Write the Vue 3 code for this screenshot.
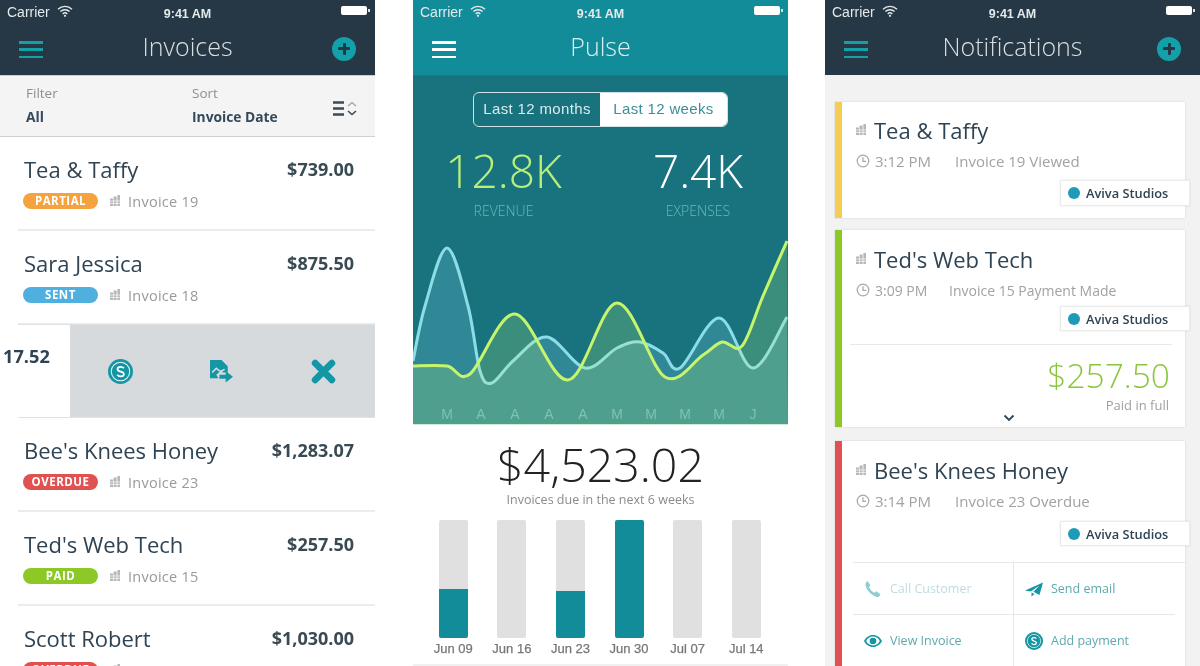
<script setup>
const rows = [
  { name: 'Tea & Taffy', amount: '$739.00', status: 'PARTIAL', cls: 'partial', invoice: 'Invoice 19' },
  { name: 'Sara Jessica', amount: '$875.50', status: 'SENT', cls: 'sent', invoice: 'Invoice 18' },
]
const rowsAfter = [
  { name: "Bee's Knees Honey", amount: '$1,283.07', status: 'OVERDUE', cls: 'overdue', invoice: 'Invoice 23' },
  { name: "Ted's Web Tech", amount: '$257.50', status: 'PAID', cls: 'paidpill', invoice: 'Invoice 15' },
  { name: 'Scott Robert', amount: '$1,030.00', status: 'OVERDUE', cls: 'overdue', invoice: 'Invoice 11' },
]
const months = ['M', 'A', 'A', 'A', 'A', 'M', 'M', 'M', 'M', 'J']
const bars = [
  { label: 'Jun 09', fill: 49 },
  { label: 'Jun 16', fill: 0 },
  { label: 'Jun 23', fill: 47 },
  { label: 'Jun 30', fill: 118 },
  { label: 'Jul 07', fill: 0 },
  { label: 'Jul 14', fill: 0 },
]
const blue = [[0,130],[12,75],[34,17],[55,75],[67,140],[79,152],[100,130],[134,106],[172,137],[204,117],[227,111],[250,122],[267,137],[306,87],[340,137],[374,86]]
const yellow = [[0,135],[34,135],[57,143],[102,83],[155,149],[204,72],[252,146],[290,124],[309,111],[329,115],[350,65],[374,10]]
function curve(p) {
  let d = `M${p[0][0]},${p[0][1]}`
  for (let i = 0; i < p.length - 1; i++) {
    const a = p[Math.max(i - 1, 0)], b = p[i], c = p[i + 1], e = p[Math.min(i + 2, p.length - 1)]
    const k = 6
    d += ` C${b[0] + (c[0] - a[0]) / k},${b[1] + (c[1] - a[1]) / k} ${c[0] - (e[0] - b[0]) / k},${c[1] - (e[1] - b[1]) / k} ${c[0]},${c[1]}`
  }
  return d
}
const blueLine = curve(blue)
const yellowLine = curve(yellow)
const blueArea = `${blueLine} L375,194 L0,194 Z`
const yellowArea = `${yellowLine} L375,194 L0,194 Z`
</script>

<template>
  <div class="page">
    <svg class="defs" width="0" height="0" aria-hidden="true">
      <symbol id="i-wifi" viewBox="0 0 16 12">
        <path d="M1 4.2a10 10 0 0 1 14 0M3.4 6.6a6.6 6.6 0 0 1 9.2 0M5.7 8.9a3.3 3.3 0 0 1 4.6 0" fill="none" stroke="currentColor" stroke-width="1.4" />
        <circle cx="8" cy="10.8" r="1.1" fill="currentColor" />
      </symbol>
      <symbol id="i-building" viewBox="0 0 10 11">
        <path d="M0 3.5h3v7.5H0zM3.6 1.5h3V11h-3zM7.4 0H10v11H7.4z" fill="currentColor" />
        <path d="M0 6h10M0 8.4h10" stroke="#fff" stroke-width=".7" />
      </symbol>
      <symbol id="i-clock" viewBox="0 0 16 16">
        <circle cx="8" cy="8" r="6.6" fill="none" stroke="currentColor" stroke-width="1.4" />
        <path d="M8 3.8V8.4H11.6" fill="none" stroke="currentColor" stroke-width="1.4" />
      </symbol>
      <symbol id="i-coin" viewBox="0 0 26 26">
        <circle cx="13" cy="13" r="13" fill="currentColor" />
        <circle cx="13" cy="13" r="9.6" fill="none" stroke="#fff" stroke-width="1.1" opacity=".9" />
        <path d="M16.5 9.6c-.8-1-2-1.5-3.4-1.5-1.9 0-3.2 1-3.2 2.5 0 3.3 6.6 1.7 6.6 5 0 1.500-1.400 2.500-3.400 2.500-1.500 0-2.800-.6-3.600-1.700" fill="none" stroke="#fff" stroke-width="1.800" />
      </symbol>
    </svg>

    <!-- Invoices -->
    <section class="phone">
      <header class="top dark">
        <div class="status">
          <span class="carrier">Carrier</span>
          <svg class="wifi"><use href="#i-wifi" /></svg>
          <span class="clock-time">9:41 AM</span>
          <span class="battery"></span>
        </div>
        <div class="nav">
          <span class="burger teal"><i></i><i></i><i></i></span>
          <h1>Invoices</h1>
          <span class="plus"></span>
        </div>
      </header>
      <div class="filters">
        <div class="filter-col">
          <span class="f-label">Filter</span>
          <b>All</b>
        </div>
        <div class="filter-col sort-col">
          <span class="f-label">Sort</span>
          <b>Invoice Date</b>
        </div>
        <svg class="sort-icon" viewBox="0 0 25 15">
          <path d="M0 1.500h11M0 7.500h11M0 13.500h11" stroke="#3b4a55" stroke-width="2.400" />
          <path d="M15 5l4-3.500 4 3.500" fill="none" stroke="#9aa3a8" stroke-width="1.300" />
          <path d="M15 10l4 3.500 4-3.500" fill="none" stroke="#3b4a55" stroke-width="1.600" />
        </svg>
      </div>
      <div v-for="r in rows" :key="r.name" class="row">
        <div class="row-top">
          <span class="name">{{ r.name }}</span>
          <span class="amount">{{ r.amount }}</span>
        </div>
        <div class="row-sub">
          <span class="pill" :class="r.cls">{{ r.status }}</span>
          <svg class="building"><use href="#i-building" /></svg>
          <span class="inv">{{ r.invoice }}</span>
        </div>
      </div>
      <div class="swipe">
        <div class="swipe-left"><span>17.52</span></div>
        <div class="swipe-actions">
          <svg class="act coin"><use href="#i-coin" /></svg>
          <svg class="act file" viewBox="0 0 24 24">
            <path d="M1 1h11l6 6v6h-5v-3l-6 5 2 3.500H1z" fill="currentColor" />
            <path d="M3 13l4-4 4 3 4-2" fill="none" stroke="#d6dadd" stroke-width="1.500" />
            <path d="M10 15h6v-3.500l7 5.500-7 5.500V19h-6z" fill="currentColor" />
          </svg>
          <svg class="act cross" viewBox="0 0 24 24">
            <path d="M4 4l16 16M20 4L4 20" stroke="currentColor" stroke-width="6.500" stroke-linecap="round" />
          </svg>
        </div>
      </div>
      <div v-for="r in rowsAfter" :key="r.name + r.invoice" class="row">
        <div class="row-top">
          <span class="name">{{ r.name }}</span>
          <span class="amount">{{ r.amount }}</span>
        </div>
        <div class="row-sub">
          <span class="pill" :class="r.cls">{{ r.status }}</span>
          <svg class="building"><use href="#i-building" /></svg>
          <span class="inv">{{ r.invoice }}</span>
        </div>
      </div>
    </section>

    <!-- Pulse -->
    <section class="phone mid">
      <header class="top tealbg">
        <div class="status">
          <span class="carrier">Carrier</span>
          <svg class="wifi"><use href="#i-wifi" /></svg>
          <span class="clock-time">9:41 AM</span>
          <span class="battery"></span>
        </div>
        <div class="nav">
          <span class="burger white"><i></i><i></i><i></i></span>
          <h1 class="pulse-title">Pulse</h1>
          <span class="plus-spacer"></span>
        </div>
      </header>
      <div class="pulse">
        <div class="segment">
          <span class="seg-off">Last 12 months</span>
          <span class="seg-on">Last 12 weeks</span>
        </div>
        <div class="stats">
          <div class="stat">
            <span class="stat-num green">12.8K</span>
            <span class="stat-label">REVENUE</span>
          </div>
          <div class="stat">
            <span class="stat-num">7.4K</span>
            <span class="stat-label">EXPENSES</span>
          </div>
        </div>
        <div class="chart">
          <svg class="chart-svg" viewBox="0 0 375 194">
            <path :d="blueArea" fill="#6bbad0" fill-opacity=".3" />
            <path :d="blueLine" fill="none" stroke="#8cdde8" stroke-width="3" />
            <path :d="yellowArea" fill="#c0f070" fill-opacity=".22" />
            <path :d="yellowLine" fill="none" stroke="#c6f56c" stroke-width="3" />
          </svg>
          <div class="months">
            <span v-for="(m, i) in months" :key="i">{{ m }}</span>
          </div>
        </div>
      </div>
      <div class="due">
        <div class="due-amount">$4,523.02</div>
        <div class="due-sub">Invoices due in the next 6 weeks</div>
      </div>
      <div class="bars">
        <div v-for="b in bars" :key="b.label" class="bar-col">
          <div class="bar-track">
            <div class="bar-fill" :style="{ height: b.fill + 'px' }"></div>
          </div>
          <span class="bar-label">{{ b.label }}</span>
        </div>
      </div>
      <div class="bottom-line"></div>
    </section>

    <!-- Notifications -->
    <section class="phone right">
      <header class="top dark">
        <div class="status">
          <span class="carrier">Carrier</span>
          <svg class="wifi"><use href="#i-wifi" /></svg>
          <span class="clock-time">9:41 AM</span>
          <span class="battery"></span>
        </div>
        <div class="nav">
          <span class="burger teal"><i></i><i></i><i></i></span>
          <h1>Notifications</h1>
          <span class="plus"></span>
        </div>
      </header>
      <div class="feed">
        <article class="card c-yellow">
          <div class="card-title"><svg class="building"><use href="#i-building" /></svg>Tea &amp; Taffy</div>
          <div class="card-meta">
            <svg class="clock"><use href="#i-clock" /></svg>
            <span class="meta-time">3:12 PM</span>
            <span class="meta-text t1">Invoice 19 Viewed</span>
          </div>
          <div class="tag"><i></i>Aviva Studios</div>
        </article>

        <article class="card c-green">
          <div class="card-title"><svg class="building"><use href="#i-building" /></svg>Ted's Web Tech</div>
          <div class="card-meta">
            <svg class="clock"><use href="#i-clock" /></svg>
            <span class="meta-time small">3:09 PM</span>
            <span class="meta-text small t2">Invoice 15 Payment Made</span>
          </div>
          <div class="tag"><i></i>Aviva Studios</div>
          <div class="settled">
            <div class="settled-amount">$257.50</div>
            <div class="settled-sub">Paid in full</div>
            <svg class="chev" viewBox="0 0 12 8">
              <path d="M1.500 1.500L6 6l4.500-4.500" fill="none" stroke="#2f4353" stroke-width="1.800" />
            </svg>
          </div>
        </article>

        <article class="card c-red">
          <div class="card-title"><svg class="building"><use href="#i-building" /></svg>Bee's Knees Honey</div>
          <div class="card-meta m3">
            <svg class="clock"><use href="#i-clock" /></svg>
            <span class="meta-time">3:14 PM</span>
            <span class="meta-text t3">Invoice 23 Overdue</span>
          </div>
          <div class="tag"><i></i>Aviva Studios</div>
          <div class="actions">
            <div class="action pale">
              <svg class="a-icon" viewBox="0 0 18 18">
                <path d="M3.600 1L6.400 5.200 5 7c.9 2.400 3 4.700 5.400 5.800l1.800-1.500 4.300 3-1.400 2.100c-.6.600-1.500.8-2.600.5C7 15.200 2.500 10 1.500 5 1.200 3.600 2.300 1.800 3.600 1z" fill="currentColor" />
              </svg>
              <span>Call Customer</span>
            </div>
            <div class="action">
              <svg class="a-icon" viewBox="0 0 18 18">
                <path d="M0 10.500L18 2.500 14.500 15 8.500 11.800 14.500 5.500 5.800 11.500zM6.500 12.500L9.500 14 6.500 16.500z" fill="currentColor" />
              </svg>
              <span>Send email</span>
            </div>
            <div class="action">
              <svg class="a-icon" viewBox="0 0 18 12">
                <path d="M9 0C5 0 1.800 2.400 0 6c1.800 3.600 5 6 9 6s7.200-2.400 9-6c-1.800-3.600-5-6-9-6zm0 1.600A7.700 7.700 0 0 1 15.800 6 7.700 7.700 0 0 1 9 10.400 7.700 7.700 0 0 1 2.200 6 7.700 7.700 0 0 1 9 1.600z" fill="currentColor" />
                <circle cx="9" cy="6" r="3.300" fill="currentColor" />
              </svg>
              <span>View Invoice</span>
            </div>
            <div class="action">
              <svg class="a-icon coin-sm"><use href="#i-coin" /></svg>
              <span>Add payment</span>
            </div>
          </div>
        </article>
      </div>
    </section>
  </div>
</template>

<style>
html, body { margin: 0; height: 666px; overflow: hidden; background: #fff; }
</style>

<style scoped>
.page {
  display: flex;
  width: 1200px;
  height: 666px;
  overflow: hidden;
  background: #fff;
  font-family: "Open Sans", "Liberation Sans", sans-serif;
  filter: blur(0.4px);
}
.defs { position: absolute; }
.phone { width: 375px; height: 666px; overflow: hidden; flex: none; display: flex; flex-direction: column; }
.mid { margin-left: 38px; }
.right { margin-left: 37px; background: #f2f2f2; }

.top { height: 75px; flex: none; box-sizing: border-box; color: #fff; }
.dark { background: #263845; }
.tealbg { background: #138c99; }
.status {
  height: 27px;
  display: flex;
  align-items: center;
  position: relative;
  padding: 0 0 3px 7px;
  box-sizing: border-box;
  font-family: "Liberation Sans", sans-serif;
  color: #e4e9ea;
}
.carrier { font-size: 14px; }
.wifi { width: 16px; height: 12px; margin-left: 7px; margin-top: -3px; }
.clock-time {
  position: absolute; left: 0; right: 0; top: 6px; text-align: center;
  font-size: 12.5px; font-weight: 700; line-height: 16px;
}
.battery {
  margin-left: auto; margin-right: 8px; margin-top: -3px;
  width: 26px; height: 9px; background: #fff; border-radius: 2px; position: relative;
}
.battery::after {
  content: ""; position: absolute; right: -3px; top: 3px; width: 2px; height: 3px; background: #ddd;
}
.nav { height: 48px; display: flex; align-items: center; padding: 0 19px; position: relative; padding-bottom: 5px; box-sizing: border-box; }
.nav h1 {
  position: absolute; left: 0; right: 0; top: 2px; margin: 0; text-align: center;
  font-size: 25px; font-weight: 300; line-height: 34px; color: #d8dfe2;
}
.nav .pulse-title { color: #d9f0f2; }
.burger { width: 24px; height: 17px; display: flex; flex-direction: column; justify-content: space-between; margin-top: 2px; }
.burger i { display: block; height: 2.500px; }
.burger.teal i { background: #13a0a8; }
.burger.white i { background: #fff; }
.plus {
  margin-left: auto; margin-right: 0; margin-top: 0;
  width: 24px; height: 24px; border-radius: 50%; background: #13a0a8; position: relative;
}
.plus::before, .plus::after { content: ""; position: absolute; background: #263845; border-radius: 1px; }
.plus::before { left: 6px; right: 6px; top: 10.500px; height: 3px; }
.plus::after { top: 6px; bottom: 6px; left: 10.500px; width: 3px; }
.plus-spacer { margin-left: auto; }

.filters {
  height: 62px; flex: none; box-sizing: border-box; background: #f4f4f4;
  border-top: 1px solid #c9cfd2; border-bottom: 1px solid #cfd2d4;
  display: flex; position: relative; padding-left: 26px;
}
.filter-col { width: 166px; display: flex; flex-direction: column; padding-top: 8px; }
.sort-col { width: 141px; }
.f-label { font-size: 13.5px; line-height: 18px; color: #8a8f92; }
.filter-col b { font-size: 13.8px; line-height: 18px; margin-top: 6px; color: #34495a; font-weight: 700; }
.sort-icon { width: 25px; height: 15px; margin-top: 25px; }

.row { height: 94px; flex: none; box-sizing: border-box; margin-left: 18px; border-bottom: 2px solid #ececec; padding: 16px 21px 0 6px; }
.row:first-of-type { height: 93px; }
.row-top { display: flex; justify-content: space-between; align-items: center; height: 32px; }
.name { font-size: 22px; color: #2f4353; line-height: 32px; }
.amount { font-size: 18px; font-weight: 700; color: #3a4a54; line-height: 30px; margin-top: -1px; }
.row-sub { display: flex; align-items: center; height: 20px; margin-top: 6px; margin-left: -1px; }
.pill {
  width: 75px; height: 16px; border-radius: 8px; color: #fff; font-size: 11.5px; font-weight: 700;
  line-height: 16px; text-align: center; letter-spacing: .5px; flex: none;
}
.partial { background: #f4a33e; }
.sent { background: #4fb0df; }
.overdue { background: #e05252; }
.paidpill { background: #8cc926; }
.row-sub .building { width: 10px; height: 11px; margin-left: 12px; color: #b4b8b8; margin-top: -1px; }
.inv { font-size: 14.5px; color: #999; margin-left: 8px; letter-spacing: .25px; }

.swipe { height: 94px; flex: none; display: flex; margin-left: 18px; box-sizing: border-box; border-top: 1px solid #e0e3e5; border-bottom: 1px solid #e0e3e5; margin-top: -1px; }
.swipe-left { width: 52px; margin-left: -18px; padding-left: 18px; flex: none; box-sizing: content-box; position: relative; }
.swipe-left span { position: absolute; left: 3px; top: 18px; font-size: 18.2px; font-weight: 700; color: #2f4353; line-height: 26px; }
.swipe-actions { flex: 1; background: #d6dadd; display: flex; align-items: center; padding-top: 2px; box-sizing: border-box; color: #1496a4; position: relative; }
.act { position: absolute; top: 34px; width: 25px; height: 25px; }
.coin { left: 38px; }
.file { left: 139px; }
.cross { left: 241px; }

.pulse { height: 349px; flex: none; background: #18737f; display: flex; flex-direction: column; border-top: 1px solid #157a86; box-sizing: border-box; }
.segment {
  width: 255px; height: 35px; margin: 16px auto 0 60px; box-sizing: border-box; display: flex;
  border: 1.500px solid #cfe3e6; border-radius: 6px; overflow: hidden;
  font-family: "Liberation Sans", sans-serif; font-size: 15px; letter-spacing: .35px; flex: none;
}
.seg-off { width: 126px; color: #d8ebed; text-align: center; line-height: 32px; }
.seg-on { flex: 1; background: #fff; color: #3a8f99; text-align: center; line-height: 32px; }
.stats { display: flex; height: 91px; flex: none; margin-top: 14px; }
.stat { display: flex; flex-direction: column; align-items: center; position: relative; flex: none; }
.stat:first-child { width: 181px; }
.stat:last-child { width: 146px; margin-left: 31px; }
.stat-num { font-size: 46px; font-weight: 300; line-height: 58px; color: #fff; }
.stat-num.green { color: #b9ee78; }
.stat-label { font-size: 14px; font-weight: 300; line-height: 18px; color: #66b8c0; margin-top: 3px; }
.chart { position: relative; height: 194px; flex: none; margin-top: -1px; }
.chart-svg { display: block; width: 375px; height: 194px; }
.months {
  position: absolute; left: 17px; bottom: 2px; display: flex;
  font-size: 14px; line-height: 18px; color: #7fc2b2; font-family: "Liberation Sans", sans-serif;
}
.months span { width: 34px; text-align: center; flex: none; }

.due { height: 96px; flex: none; text-align: center; box-sizing: border-box; padding-top: 12px; background: #fff; }
.due-amount { font-size: 46.500px; font-weight: 300; line-height: 56px; color: #222; }
.due-sub { font-size: 12.500px; font-weight: 400; line-height: 16px; color: #8b8b8b; }
.bars { display: flex; flex: none; padding-left: 11px; background: #fff; }
.bar-col { width: 58.600px; display: flex; flex-direction: column; align-items: center; flex: none; }
.bar-track { width: 29px; height: 118px; background: #e0e0e0; border-radius: 2px; display: flex; flex-direction: column; justify-content: flex-end; overflow: hidden; flex: none; }
.bar-fill { background: #138c99; }
.bar-label { font-size: 13px; line-height: 18px; margin-top: 2px; color: #777; font-family: "Liberation Sans", sans-serif; -webkit-text-stroke: .25px #777; }
.bottom-line { height: 2px; margin-top: 6px; background: #f0f0f0; }

.feed { flex: 1; padding: 27px 15px 0 10px; display: flex; flex-direction: column; min-height: 0; }
.card {
  background: #fff; box-sizing: border-box; border-left: 7px solid; flex: none;
  box-shadow: 0 0 2px rgba(0, 0, 0, .14); display: flex; flex-direction: column;
  padding: 13px 0 0 14px;
}
.c-yellow { border-color: #f5cd52; height: 116px; }
.c-green { border-color: #8cc926; height: 197px; margin-top: 12px; padding-top: 14px; }
.c-red { border-color: #e05252; height: 240px; margin-top: 14px; padding-top: 14px; }
.card-title { display: flex; align-items: center; font-size: 22px; line-height: 30px; color: #2f4353; }
.card-title .building { width: 10px; height: 11px; color: #b4b8b8; margin-right: 8px; margin-top: -1px; }
.card-meta { display: flex; align-items: center; height: 20px; margin-top: 6px; color: #a2a2a2; font-size: 15px; white-space: nowrap; }
.clock { width: 14px; height: 14px; color: #a8a8a8; margin-right: 5px; flex: none; }
.meta-time { width: 56px; flex: none; }
.t1, .t3 { margin-left: 24px; }
.t2 { margin-left: 20px; }
.small { font-size: 14px; }
.meta-time.small { width: 54px; }
.tag {
  align-self: flex-end; margin-top: 9px; margin-right: -5px; width: 130px; height: 26px; box-sizing: border-box;
  background: #fff; border: 1px solid #ebebeb; box-shadow: 0 0 2px rgba(0, 0, 0, .1);
  display: flex; align-items: center; padding-left: 7px; font-size: 12.800px; font-weight: 600; color: #2f4353;
}
.tag i { width: 12px; height: 12px; border-radius: 50%; background: #1f9bb8; margin-right: 6px; flex: none; }
.c-green .tag { margin-top: 6px; height: 25px; }
.c-red .tag { margin-top: 10px; height: 25px; }
.settled { margin: 13px 13px 0 -6px; border-top: 1px solid #e8e8e8; text-align: right; position: relative; }
.settled-amount { font-size: 33.500px; font-weight: 300; line-height: 44px; color: #8cc63f; margin-top: 8px; padding-right: 2px; }
.settled-sub { font-size: 13px; line-height: 16px; color: #a0a0a0; padding-right: 3px; }
.chev { position: absolute; left: 153px; top: 69px; width: 12px; height: 8px; }
.actions { display: grid; grid-template-columns: 161px 161px; grid-auto-rows: 52px; margin: 16px 0 0 -3px; border-top: 1px solid #e8e8e8; }
.action { display: flex; align-items: center; padding-left: 11px; font-size: 12.500px; color: #5fa8ac; border-bottom: 1px solid #e8e8e8; box-sizing: border-box; }
.action:nth-child(odd) { border-right: 1px solid #e8e8e8; }
.action .a-icon { width: 18px; height: 18px; color: #1496a4; margin-right: 8px; flex: none; }
.action.pale { color: #bfdde0; }
.action.pale .a-icon { color: #8fcdd2; }
.coin-sm { color: #1b8f99; }
</style>
